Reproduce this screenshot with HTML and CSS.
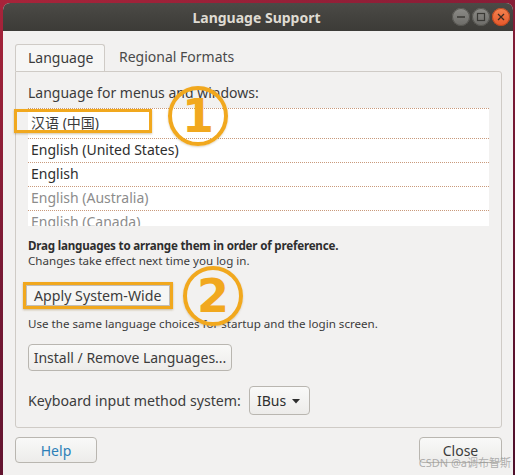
FILE: index.html
```html
<!DOCTYPE html>
<html>
<head>
<meta charset="utf-8">
<link rel="stylesheet" href="styles.css">
</head>
<body>
<div class="desktop">
  <div class="window">
    <div class="titlebar">
      <span class="title">Language Support</span>
      <div class="wbtns">
        <span class="wbtn grey"><svg width="18" height="18" viewBox="0 0 18 18"><path d="M5 9h8" stroke="#3a3935" stroke-width="1.3"/></svg></span>
        <span class="wbtn grey"><svg width="18" height="18" viewBox="0 0 18 18"><rect x="5.5" y="5.5" width="7" height="7" fill="none" stroke="#3a3935" stroke-width="1.2"/></svg></span>
        <span class="wbtn orange"><svg width="18" height="18" viewBox="0 0 18 18"><path d="M6 6l6 6M12 6l-6 6" stroke="#3a2a22" stroke-width="1.3"/></svg></span>
      </div>
    </div>
    <div class="content">
      <div class="tabs">
        <div class="tab active">Language</div>
        <div class="tab">Regional Formats</div>
      </div>
      <div class="panel">
        <div class="label">Language for menus and windows:</div>
        <div class="list">
          <div class="row first">汉语 (中国)</div>
          <div class="row">English (United States)</div>
          <div class="row">English</div>
          <div class="row dim">English (Australia)</div>
          <div class="row dim">English (Canada)</div>
        </div>
        <p class="hint strong">Drag languages to arrange them in order of preference.</p>
        <p class="hint">Changes take effect next time you log in.</p>
        <div class="mark-box"><button class="btn apply">Apply System-Wide</button></div>
        <p class="hint gap">Use the same language choices for startup and the login screen.</p>
        <button class="btn install">Install / Remove Languages...</button>
        <div class="kbd-row">
          <span class="kbd-label">Keyboard input method system:</span>
          <div class="combo">IBus <svg width="10" height="6" viewBox="0 0 10 6"><path d="M1 1h8L5 5.5z" fill="#2e2e2e"/></svg></div>
        </div>
      </div>
      <div class="footer">
        <button class="btn help">Help</button>
        <button class="btn close">Close</button>
      </div>
    </div>
  </div>
  <div class="mark-rect"></div>
  <div class="mark-circle c1"><span>1</span></div>
  <div class="mark-circle c2"><span>2</span></div>
  <div class="watermark">CSDN @a调布智斯</div>
</div>
</body>
</html>
```
FILE: styles.css
```css
* { box-sizing: border-box; }
html, body { margin: 0; padding: 0; }
body {
  width: 515px;
  height: 475px;
  overflow: hidden;
  font-family: "Noto Sans", "Noto Sans CJK SC", sans-serif;
  color: #3c3c3c;
}
.desktop {
  position: relative;
  height: 475px;
  padding: 3px 2px 0 3px;
  background: linear-gradient(160deg, #a8243a 0%, #7a1a35 40%, #4e0f2b 100%);
}
.window {
  height: 472px;
  background: #f2f1f0;
  border-radius: 7px 7px 0 0;
  overflow: hidden;
  display: flex;
  flex-direction: column;
}
.titlebar {
  height: 28px;
  flex: none;
  background: linear-gradient(#4b4a46, #3c3b37);
  display: grid;
  grid-template-columns: 1fr auto 1fr;
  align-items: center;
  padding: 0 3px 0 0;
}
.title {
  grid-column: 2;
  color: #dfdbd2;
  font-weight: bold;
  font-size: 14px;
  padding-top: 1px;
}
.wbtns {
  grid-column: 3;
  justify-self: end;
  display: flex;
  gap: 2px;
}
.wbtn {
  width: 18px;
  height: 18px;
  border-radius: 50%;
  display: block;
}
.wbtn svg { display: block; }
.wbtn.grey {
  background: linear-gradient(#8d8c88, #6c6b67);
  box-shadow: inset 0 0 0 1px #55544f;
}
.wbtn.orange {
  background: linear-gradient(#f58450, #e4572a);
  box-shadow: inset 0 0 0 1px #b8461f;
}
.content {
  flex: 1;
  padding: 13px 11px 0 12px;
  display: flex;
  flex-direction: column;
}
.tabs {
  display: flex;
  height: 27px;
  font-size: 14px;
}
.tab {
  padding: 0 13px 0 14px;
  line-height: 26px;
  color: #4a4a4a;
}
.tab.active {
  border: 1px solid #cfcbc6;
  border-bottom: none;
  border-radius: 3px 3px 0 0;
  background: #f6f6f5;
  color: #3c3c3c;
  width: 90px;
  padding-left: 12px;
}
.panel {
  height: 357px;
  border: 1px solid #cfcbc6;
  border-radius: 0 3px 3px 3px;
  padding: 12px;
  font-size: 14px;
}
.label {
  line-height: 18px;
  color: #3c3c3c;
}
.list {
  margin-top: 6px;
  height: 118px;
  overflow: hidden;
  background: #ffffff;
}
.row {
  height: 24px;
  line-height: 22px;
  padding-left: 3px;
  border-top: 1px dotted #c99a7c;
  color: #2e2e2e;
}
.row.first {
  height: 30px;
  line-height: 28px;
  color: #3a3a3a;
}
.row.dim { color: #8c8c8c; }
.hint {
  margin: 0;
  font-size: 11.6px;
  line-height: 15px;
  color: #3c3c3c;
}
.hint.strong {
  margin-top: 12px;
  font-weight: bold;
  letter-spacing: -0.2px;
  color: #2e2e2e;
}
.hint.gap { margin-top: 7px; }
.btn {
  font-family: inherit;
  font-size: 14px;
  color: #3c3c3c;
  background: linear-gradient(#f9f9f8, #edecea);
  border: 1px solid #b9b6b0;
  border-radius: 4px;
  padding: 0;
  margin: 0;
  display: block;
}
.mark-box {
  margin-top: 14px;
  margin-left: -5px;
  width: 150px;
  height: 27px;
  border: 3px solid #f1a81e;
  box-shadow: 0 1px 2px rgba(120, 80, 0, 0.35);
}
.btn.apply {
  width: 100%;
  height: 100%;
  border-radius: 0;
  border-color: #c2beb8;
  background: #f6f6f5;
  text-align: left;
  padding-left: 7px;
  font-size: 14.2px;
  line-height: 19px;
}
.btn.install {
  margin-top: 13px;
  width: 204px;
  height: 27px;
}
.kbd-row {
  margin-top: 15px;
  height: 29px;
  display: flex;
  align-items: center;
  gap: 8px;
}
.kbd-label {
  font-size: 14.2px;
}
.combo {
  width: 61px;
  height: 29px;
  border: 1px solid #b9b6b0;
  border-radius: 4px;
  background: linear-gradient(#f9f9f8, #edecea);
  display: flex;
  align-items: center;
  justify-content: space-between;
  padding: 0 8px 0 7px;
  color: #2e2e2e;
}
.combo svg { display: block; }
.footer {
  margin-top: 9px;
  display: flex;
  justify-content: space-between;
}
.btn.help, .btn.close {
  height: 26px;
  width: 82px;
}
.btn.close { width: 83px; }
.btn.help { color: #2d80b8; }
.mark-rect {
  position: absolute;
  left: 14px;
  top: 109px;
  width: 138px;
  height: 24px;
  border: 3px solid #f1a81e;
  box-shadow: 0 1px 2px rgba(120, 80, 0, 0.35);
}
.mark-circle {
  position: absolute;
  width: 60px;
  height: 60px;
  border: 4px solid #f1a81e;
  border-radius: 50%;
  display: flex;
  align-items: center;
  justify-content: center;
  color: #f1a81e;
  font-family: "DejaVu Sans", sans-serif;
  font-weight: bold;
  font-size: 46px;
  line-height: 1;
  box-shadow: 0 1px 2px rgba(120, 80, 0, 0.25);
}
.mark-circle.c1 { left: 168px; top: 86px; }
.mark-circle.c2 { left: 183px; top: 266px; }
.watermark {
  position: absolute;
  right: 4px;
  bottom: 5px;
  font-size: 11px;
  color: rgba(150, 150, 150, 0.75);
}
```
